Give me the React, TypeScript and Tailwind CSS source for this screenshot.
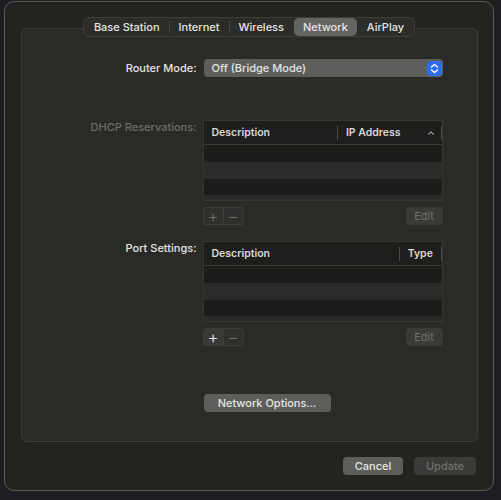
import { ChevronUp } from "lucide-react";

const tabs = ["Base Station", "Internet", "Wireless", "Network", "AirPlay"];

function Stepper() {
  return (
    <div className="w-[15px] h-[15px] rounded-[4px] bg-[#2c6cf0] flex items-center justify-center">
      <svg width="9" height="11" viewBox="0 0 9 11" fill="none" stroke="white" strokeWidth="1.5" strokeLinecap="round" strokeLinejoin="round">
        <path d="M1.5 4 L4.5 1.5 L7.5 4" />
        <path d="M1.5 7 L4.5 9.5 L7.5 7" />
      </svg>
    </div>
  );
}

function Table({ cols }: { cols: { label: string; width: string; sort?: boolean }[] }) {
  return (
    <div className="w-[240px] h-[81px] border border-[#363733] bg-[#2b2c29] overflow-hidden flex flex-col">
      <div className="h-[24px] flex items-center bg-[#1e1f1c] border-b border-[#3a3b37] shrink-0">
        {cols.map((c) => (
          <div key={c.label} className={`${c.width} h-full flex items-center pl-[8px] pr-[6px] relative`}>
            <span className="text-[10.5px] font-semibold text-[#d8d8d6] flex-1">{c.label}</span>
            {c.sort && <ChevronUp className="w-[10px] h-[10px] text-[#bdbdbb]" strokeWidth={2.5} />}
            <span className="absolute right-0 top-[5px] w-px h-[14px] bg-[#4a4b47]" />
          </div>
        ))}
      </div>
      <div className="h-[17px] bg-[#1c1c1b] shrink-0" />
      <div className="h-[17px] bg-[#2b2c29] shrink-0" />
      <div className="h-[16px] bg-[#1c1c1b] shrink-0" />
    </div>
  );
}

function TableButtons({ plusActive }: { plusActive?: boolean }) {
  return (
    <div className="w-[240px] flex items-center justify-between mt-[6px]">
      <div className="flex h-[18px] border border-[#3c3d39] rounded-[3px] overflow-hidden">
        <div className={`w-[20px] flex items-center justify-center text-[17px] font-light leading-none border-r border-[#3c3d39] ${plusActive ? "bg-[#3a3b38] text-[#e8e8e6]" : "bg-[#2f302d] text-[#6f706c]"}`}>+</div>
        <div className="w-[19px] flex items-center justify-center text-[17px] font-light leading-none bg-[#2f302d] text-[#6f706c]">−</div>
      </div>
      <div className="w-[37px] h-[18px] rounded-[4px] bg-[#3a3b38] text-[11px] text-[#6e6f6b] flex items-center justify-center">Edit</div>
    </div>
  );
}

export default function App() {
  return (
    <div className="w-[501px] h-[500px] bg-[#1d1e22] pt-[1px] pl-[4px] font-['Inter','Liberation_Sans',sans-serif] text-[#e4e4e2]">
      <div className="w-[490px] h-[490px] rounded-[10px] border border-[#5a5b58] bg-[#232420] flex flex-col items-center">
        <div className="relative z-10 mt-[15px] h-[20px] flex items-center rounded-[6px] bg-[#2c2d2a] border border-[#3d3e3a] px-[1px] text-[11px] font-medium">
          {tabs.map((t, i) => (
            <div key={t} className="flex items-center h-full">
              {i > 0 && tabs[i - 1] !== "Network" && t !== "Network" && (
                <span className="w-px h-[12px] bg-[#444541]" />
              )}
              <div className={`h-[18px] flex items-center rounded-[5px] ${t === "Network" ? "bg-[#646562] px-[9px] mx-[1px]" : "px-[9px]"}`}>
                {t}
              </div>
            </div>
          ))}
        </div>

        <div className="-mt-[9px] w-[457px] h-[414px] rounded-[6px] border border-[#3b3c38] bg-[#2a2b27] flex flex-col">
          <div className="mt-[30px] flex items-center">
            <div className="w-[175px] text-right text-[11px] font-medium">Router Mode:</div>
            <div className="ml-[7px] w-[239px] h-[18px] rounded-[4px] bg-[#5d5e5b] flex items-center justify-between pl-[8px] pr-[1px] text-[11px] font-medium">
              <span>Off (Bridge Mode)</span>
              <Stepper />
            </div>
          </div>

          <div className="mt-[43px] flex items-start">
            <div className="w-[175px] text-right text-[11px] leading-[14px] font-medium text-[#6c6d69]">DHCP Reservations:</div>
            <div className="ml-[6px] flex flex-col">
              <Table cols={[{ label: "Description", width: "w-[135px]" }, { label: "IP Address", width: "w-[104px]", sort: true }]} />
              <TableButtons />
            </div>
          </div>

          <div className="mt-[16px] flex items-start">
            <div className="w-[175px] text-right text-[11px] leading-[14px] font-medium">Port Settings:</div>
            <div className="ml-[6px] flex flex-col">
              <Table cols={[{ label: "Description", width: "w-[197px]" }, { label: "Type", width: "w-[42px]" }]} />
              <TableButtons plusActive />
            </div>
          </div>

          <div className="mt-[48px] ml-[182px]">
            <div className="w-[127px] h-[18px] rounded-[4px] bg-[#5d5e5b] text-[11px] font-medium flex items-center justify-center">
              Network Options...
            </div>
          </div>
        </div>

        <div className="w-full flex justify-end gap-[11px] pr-[17px] mt-[15px]">
          <div className="w-[60px] h-[18px] rounded-[4px] bg-[#5d5e5b] text-[11px] font-medium flex items-center justify-center">Cancel</div>
          <div className="w-[62px] h-[18px] rounded-[4px] bg-[#3a3b38] text-[11px] font-medium text-[#6e6f6b] flex items-center justify-center">Update</div>
        </div>
      </div>
    </div>
  );
}
